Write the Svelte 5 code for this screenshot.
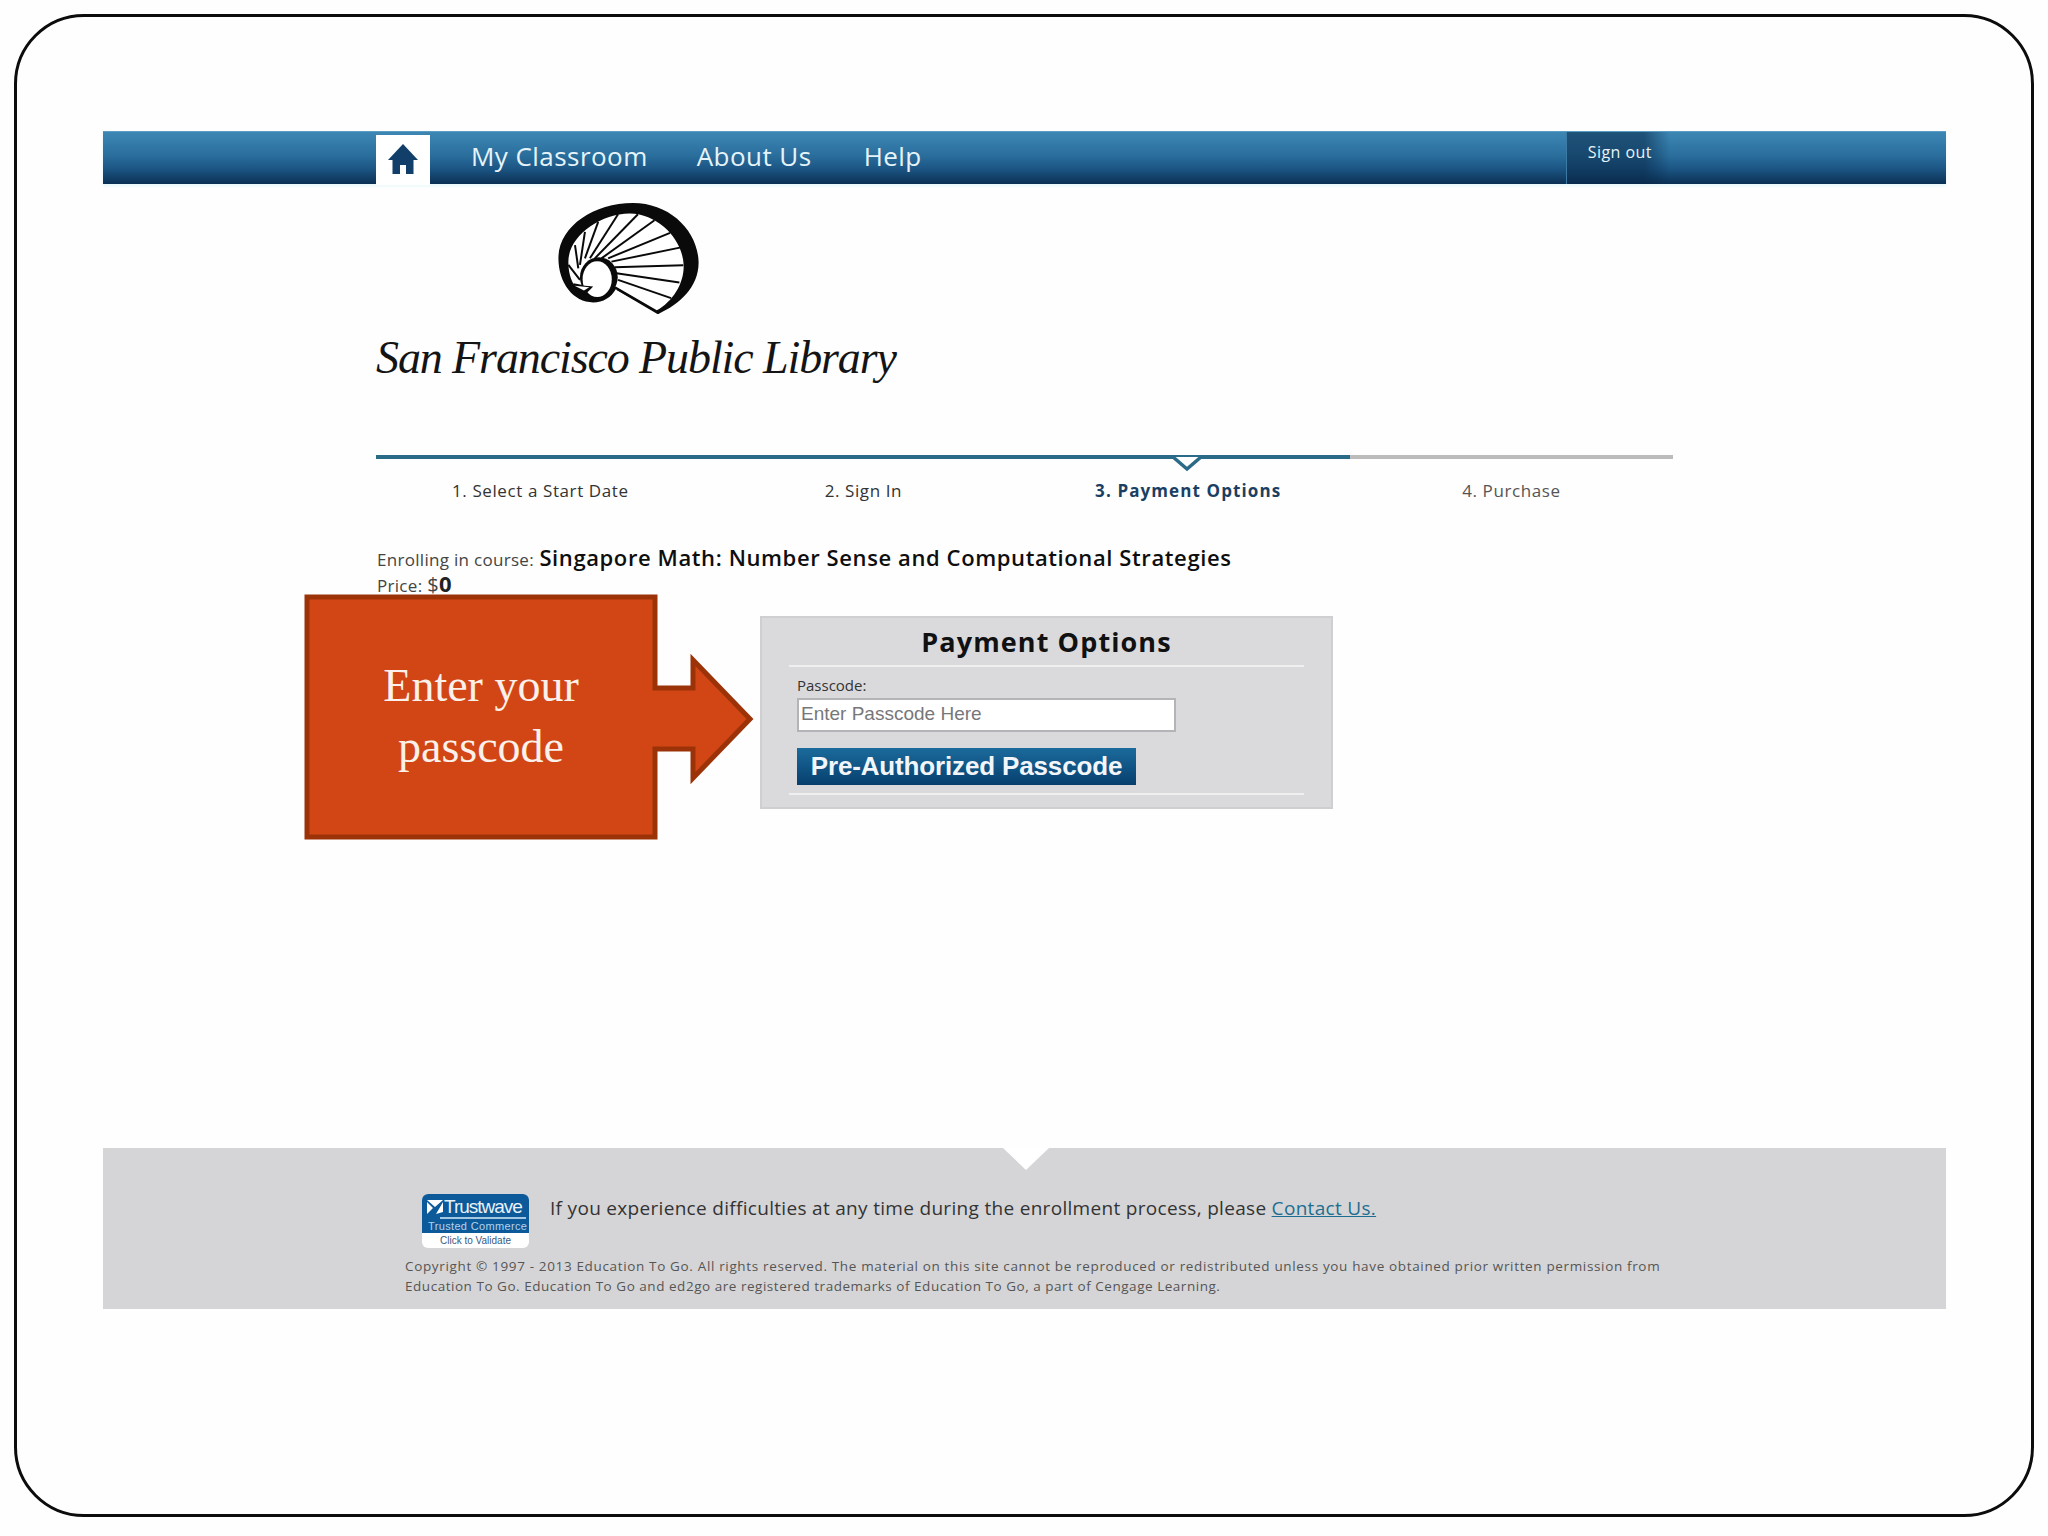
<script>
  const steps = [
    { label: '1. Select a Start Date', cls: 's1' },
    { label: '2. Sign In', cls: 's2' },
    { label: '3. Payment Options', cls: 's3' },
    { label: '4. Purchase', cls: 's4' }
  ];
  const spokes = [
    [225,232,432,226],[230,250,420,278],[235,270,395,325],[215,215,425,172],
    [205,205,392,128],[185,205,345,90],[165,205,295,72],[150,205,235,72],
    [135,205,175,95],[120,225,135,125],[115,235,105,165],[120,270,85,225],[135,290,100,283]
  ];
</script>

<div class="page">
  <div class="frame">
    <nav class="nav">
      <div class="home">
        <svg width="32" height="32" viewBox="0 0 32 32"><path d="M16 1 L31 17 L26.500 17 L26.500 31 L19 31 L19 22 L13 22 L13 31 L5.500 31 L5.500 17 L1 17 Z" fill="#123f6a"/></svg>
      </div>
      <a class="item i1">My Classroom</a>
      <a class="item i2">About Us</a>
      <a class="item i3">Help</a>
      <div class="signout"><span>Sign out</span></div>
    </nav>

    <main class="content">
      <div class="logo">
        <svg width="141" height="111" viewBox="55 38 423 335">
          <path d="M358 372 C420 345 480 290 478 215 C475 120 390 38 280 38 C160 38 55 110 55 205 C55 280 100 338 160 338 C190 338 215 322 228 298 Z" fill="#0a0a0a"/>
          <path d="M352 362 C400 335 435 280 433 225 C430 150 360 72 270 70 C180 70 85 140 85 215 C85 245 92 270 105 290 L135 300 L228 290 Z" fill="#fff"/>
          {#each spokes as s}
            <line x1={s[0]} y1={s[1]} x2={s[2]} y2={s[3]} stroke="#0a0a0a" stroke-width="6"/>
          {/each}
          <path d="M232 298 L358 372" stroke="#0a0a0a" stroke-width="6"/>
          <ellipse cx="177" cy="262" rx="57" ry="60" fill="#0a0a0a"/>
          <ellipse cx="172" cy="268" rx="44" ry="54" fill="#fff"/>
          <path d="M96 284 L160 290 L136 314 L118 306 Z" fill="#0a0a0a"/>
          <path d="M104 288 L148 292 L132 302 Z" fill="#fff"/>
        </svg>
      </div>
      <h1 class="libname">San Francisco Public Library</h1>

      <div class="progress">
        <div class="line done"></div>
        <div class="line rest"></div>
        <svg class="notch" width="50" height="20" viewBox="0 0 50 20"><path d="M0 2 L11 2 L25 14 L39 2 L50 2" fill="#fff" stroke="#2a6c88" stroke-width="3.500"/></svg>
      </div>
      <div class="steps">
        {#each steps as s}
          <span class="step {s.cls}">{s.label}</span>
        {/each}
      </div>

      <p class="enrol"><span class="lbl">Enrolling in course:</span> <b>Singapore Math: Number Sense and Computational Strategies</b></p>
      <p class="price"><span class="lbl">Price: <span class="dollar">$</span></span><b>0</b></p>

      <section class="panel">
        <h2>Payment Options</h2>
        <div class="sep"></div>
        <label class="plabel" for="pc">Passcode:</label>
        <input id="pc" class="pinput" placeholder="Enter Passcode Here" />
        <button class="pbtn">Pre-Authorized Passcode</button>
        <div class="sep low"></div>
      </section>
    </main>

    <footer class="footer">
      <svg class="fnotch" width="46" height="22" viewBox="0 0 46 22"><path d="M0 0 H46 L23 22 Z" fill="#fff"/></svg>
      <div class="fhead">
        <div class="seal">
          <div class="seal-top">
            <div class="tw"><svg width="16" height="16" viewBox="0 0 16 16"><path d="M0 1 H16 L8 8 Z M0 3 L6 9 L0 15 Z M16 3 V13 L9 15 Z" fill="#fff"/></svg><span>Trustwave</span></div>
            <div class="rule"></div>
            <div class="tc">Trusted Commerce</div>
          </div>
          <div class="seal-bot">Click to Validate</div>
        </div>
        <p class="help">If you experience difficulties at any time during the enrollment process, please <a>Contact Us.</a></p>
      </div>
      <p class="copy">Copyright © 1997 - 2013 Education To Go. All rights reserved. The material on this site cannot be reproduced or redistributed unless you have obtained prior written permission from<br/><span class="l2">Education To Go. Education To Go and ed2go are registered trademarks of Education To Go, a part of Cengage Learning.</span></p>
    </footer>
  </div>

  <div class="callout">
    <svg class="callout-shape" width="456" height="254" viewBox="0 0 456 254">
      <path d="M3 3 H351 V94 H389 V66 L446 125 L389 184 V155 H351 V243 H3 Z" fill="#d24615" stroke="#9c3308" stroke-width="5" stroke-linejoin="miter"/>
    </svg>
    <div class="callout-text">Enter your<br/>passcode</div>
  </div>
</div>

<style>
  :global(body) { margin: 0; background: #fff; }
  * { box-sizing: border-box; }
  .page { position: relative; width: 2048px; height: 1536px; background: #fefefe; overflow: hidden; font-family: "Open Sans", sans-serif; }
  .frame { margin: 14px 0 0 14px; width: 2020px; height: 1503px; border: 3px solid #0c0c0c; border-radius: 70px; padding: 114px 0 0 86px; background: #fefefe; }

  .nav { width: 1843px; height: 53px; display: flex; align-items: center; background: linear-gradient(#3d87b5 0%, #2a6e9c 45%, #1c5685 70%, #0b3054 100%); border-top: 1px solid #5d9cc2; box-shadow: 0 2px 3px #e6f7fa; padding-left: 273px; }
  .home { width: 54px; height: 50px; margin-top: 3px; background: #fff; display: flex; justify-content: center; padding-top: 8px; }
  .item { color: #e6f4fa; font-size: 26px; line-height: 1; letter-spacing: .45px; margin-top: -4px; }
  .i1 { margin-left: 41px; }
  .i2 { margin-left: 49px; }
  .i3 { margin-left: 52px; }
  .signout { margin-left: 644px; width: 104px; height: 52px; background: linear-gradient(90deg, rgba(8,40,72,.55) 75%, rgba(8,40,72,0)); border-left: 1px solid #3c7aa4; padding: 9px 0 0 21px; color: #e6f4fa; font-size: 16px; letter-spacing: .45px; }

  .content { padding-left: 273px; height: 964px; }
  .logo { margin-left: 182px; padding-top: 19px; line-height: 0; height: 130px; }
  .libname { margin: 16px 0 0 0; font: italic 400 46px/56px "Liberation Serif", serif; letter-spacing: -1.1px; color: #141414; height: 56px; white-space: nowrap; }

  .progress { position: relative; margin-top: 69px; width: 1297px; height: 4px; display: flex; }
  .line { height: 4px; }
  .done { width: 974px; background: #2a6c88; }
  .rest { width: 323px; background: #bcbcbc; }
  .notch { position: absolute; left: 786px; top: 0; }

  .steps { position: relative; display: flex; margin-top: 20px; height: 24px; font-size: 17px; line-height: 24px; color: #333; letter-spacing: .6px; white-space: nowrap; }
  .s1 { margin-left: 76px; }
  .s2 { margin-left: 196px; }
  .s3 { margin-left: 193px; font-weight: 700; color: #1b3f63; letter-spacing: 1.1px; }
  .s4 { margin-left: 181px; color: #555; }

  .enrol { margin: 41px 0 0 1px; height: 27px; line-height: 26px; white-space: nowrap; font-size: 17px; color: #444; }
  .enrol b { font-size: 22px; font-weight: 600; color: #0e0e0e; letter-spacing: .6px; margin-left: 1px; }
  .price { margin: 0 0 0 1px; height: 24px; line-height: 24px; font-size: 17px; color: #444; }
  .price b { font-size: 22px; font-weight: 700; color: #222; }
  .dollar { font-size: 20px; }
  .lbl { letter-spacing: .3px; }

  .panel { margin: 21px 0 0 384px; width: 573px; height: 193px; background: #dadadd; border: 2px solid #cfcfd2; padding: 0 27px 0 28px; }
  .panel h2 { margin: 0; height: 47px; line-height: 48px; font-size: 27px; font-weight: 700; color: #111; text-align: center; padding-right: 1px; letter-spacing: 1.1px; white-space: nowrap; }
  .sep { height: 2px; background: #efeff0; margin-left: -1px; }
  .plabel { display: block; margin: 8px 0 0 7px; font-size: 15px; line-height: 20px; color: #333; }
  .pinput { display: block; margin: 3px 0 0 7px; width: 379px; height: 34px; border: 2px solid #b4b4b8; background: #fff; padding: 0 2px 2px; font: 19px "Liberation Sans", sans-serif; }
  .pinput::placeholder { color: #77777a; opacity: 1; }
  .pbtn { display: block; margin: 16px 0 0 7px; width: 339px; height: 37px; border: 0; padding: 0; background: linear-gradient(#1b6b9c, #063f6e); color: #f2f6fa; font: 700 26px/37px "Liberation Sans", sans-serif; letter-spacing: -.15px; text-align: center; white-space: nowrap; }
  .low { margin-top: 8px; }

  .footer { position: relative; width: 1843px; height: 161px; background: #d5d5d7; padding: 46px 0 0 302px; }
  .fnotch { position: absolute; left: 900px; top: 0; }
  .fhead { display: flex; align-items: flex-start; margin-left: 17px; height: 56px; }
  .seal { width: 107px; height: 54px; border-radius: 6px; overflow: hidden; background: #fff; font-family: "Liberation Sans", sans-serif; }
  .seal-top { height: 39px; background: #0d5a9a; padding: 4px 0 0 5px; color: #e8f1f8; }
  .tw { display: flex; align-items: center; height: 17px; font-size: 19px; letter-spacing: -1px; line-height: 17px; }
  .tw svg { margin-right: 1px; }
  .rule { height: 2px; width: 86px; margin: 2px 0 1px 13px; background: #a5c8e2; }
  .tc { font-size: 11px; line-height: 13px; color: #b3d2ea; white-space: nowrap; letter-spacing: .35px; padding-left: 1px; }
  .seal-bot { height: 15px; font-size: 10px; line-height: 15px; color: #3a5a80; text-align: center; }
  .help { margin: 0 0 0 21px; font-size: 19px; line-height: 28px; color: #333; white-space: nowrap; letter-spacing: .31px; }
  .help a { color: #1d6e90; text-decoration: underline; }
  .copy { margin: 6px 0 0 0; font-size: 13.500px; line-height: 20px; color: #555; white-space: nowrap; letter-spacing: .65px; }
  .l2 { letter-spacing: .53px; }

  .callout { position: absolute; left: 304px; top: 594px; width: 456px; height: 254px; }
  .callout-shape { display: block; }
  .callout-text { position: absolute; left: 3px; top: 61px; width: 348px; text-align: center; color: #fbf1ea; font: 46px/61px "Liberation Serif", serif; }
</style>
